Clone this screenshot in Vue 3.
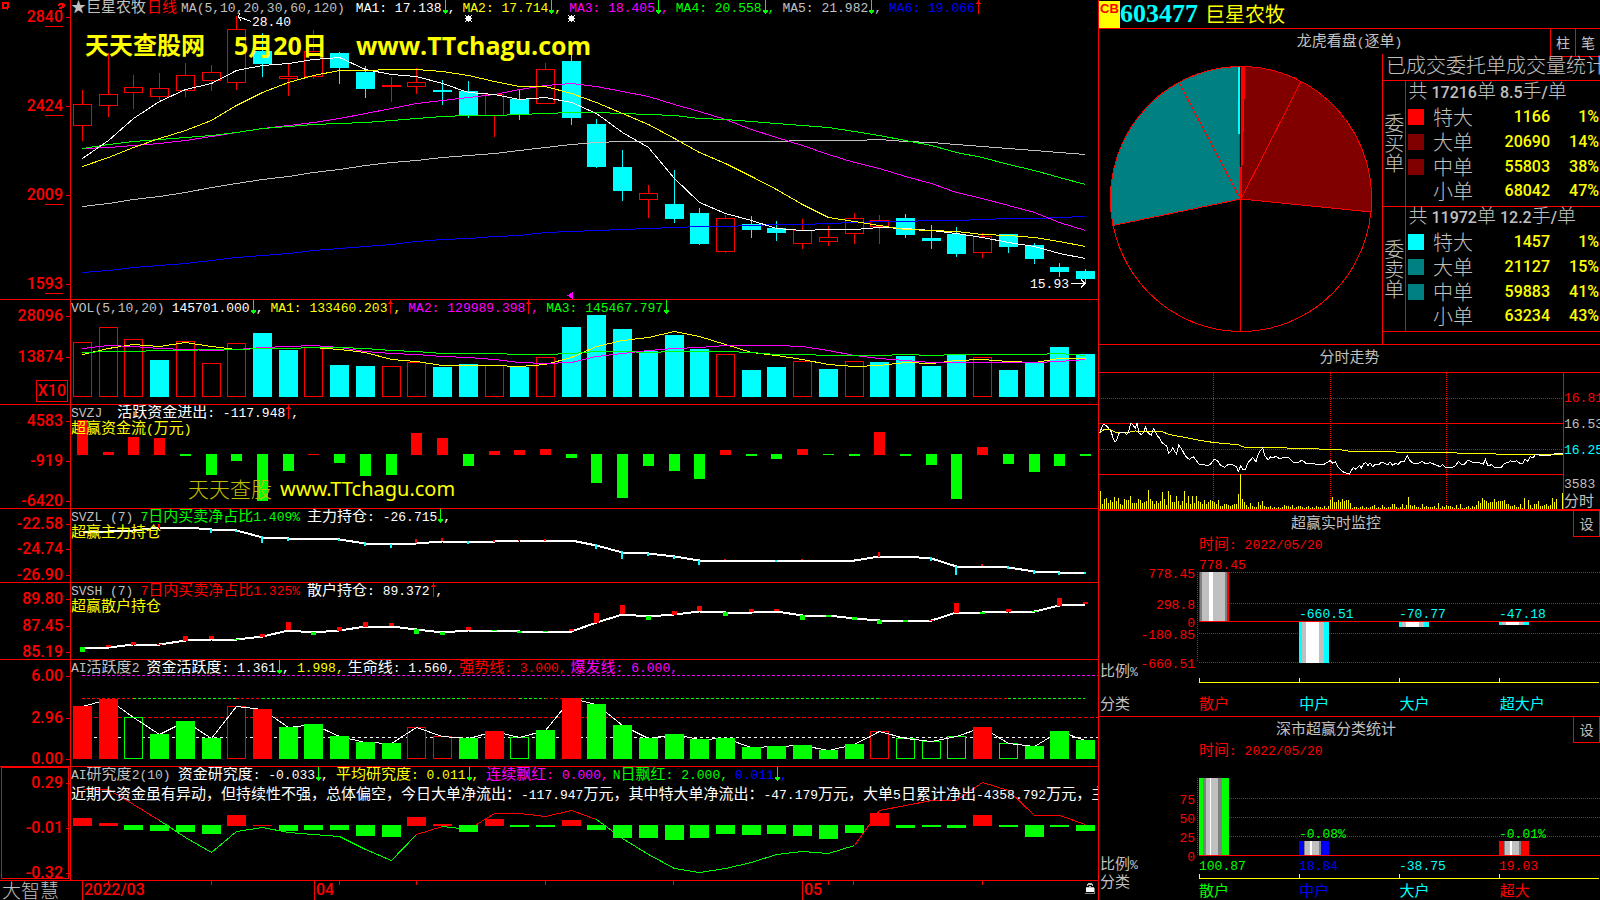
<script setup>
import { h } from 'vue'

// Text with Chinese runs set slightly larger than the monospaced Latin runs.
const Mix = (props) =>
  h('span', props.s.split(/([\u3000-\u9fff\uff00-\uffef★]+)/).filter(Boolean).map((run) =>
    /[\u3000-\u9fff\uff00-\uffef★]/.test(run) ? h('span', { class: 'zh' }, run) : run))
Mix.props = ['s']

const Arrow = (props) =>
  h('svg', { class: 'arrow', viewBox: '0 0 5 15', 'shape-rendering': 'crispEdges' }, [
    props.up
      ? h('path', { d: 'M2 0h1v14h-1zM1 2h3v1h-3zM0 3h5v1h-5z', fill: '#f00' })
      : h('path', { d: 'M2 0h1v14h-1zM1 12h3v1h-3zM0 10h1v2h-1zM4 10h1v2h-1zM1 10h3v2h-3z', fill: '#0f0' }),
  ])
Arrow.props = ['up']

const RED = '#f00', GREEN = '#0f0', CYAN = '#0ff', YELLOW = '#ff0', MAGENTA = '#f0f', SILVER = '#c0c0c0', BLUE = '#00f'
const X0 = 71, W = 1027
const X = (i) => Math.round(82 + i * 25.72)
const line = (ys) => ys.map((y, i) => `${X(i) + 0.5},${y + 0.5}`).join(' ')
const part = (ys, a, b) => ys.slice(a, b + 1).map((y, k) => `${X(a + k) + 0.5},${y + 0.5}`).join(' ')
const pts = (flat) => {
  const out = []
  for (let i = 0; i < flat.length; i += 2) out.push(`${flat[i]},${flat[i + 1]}`)
  return out.join(' ')
}
const at = (p, x, y) => ({ left: `${((x - X0) / W) * 100}%`, top: `${((y - p.y) / p.h) * 100}%` })
const atY = (p, y) => ({ top: `${((y + 0.5 - p.y) / p.h) * 100}%` })

const P = {
  main: { y: 0, h: 299, axis: [['2840', 16], ['2424', 105], ['2009', 194], ['1593', 283]] },
  vol: { y: 300, h: 104, axis: [['28096', 315], ['13874', 356]] },
  zj: { y: 405, h: 103, axis: [['4583', 420], ['-919', 460], ['-6420', 500]] },
  zl: { y: 509, h: 73, axis: [['-22.58', 524], ['-24.74', 549], ['-26.90', 574]] },
  sh: { y: 583, h: 76, axis: [['89.80', 598], ['87.45', 625], ['85.19', 651]] },
  act: { y: 660, h: 106, axis: [['6.00', 675], ['2.96', 717], ['0.00', 758]] },
  res: { y: 767, h: 113, axis: [['0.29', 782], ['-0.01', 827], ['-0.32', 872]] },
}
const box = (p) => `${X0} ${p.y} ${W} ${p.h}`

// up?, body top, body bottom, high, low
const candles = [
  [1, 104, 126, 90, 141], [1, 94, 106, 53, 117], [1, 87, 93, 75, 109], [1, 88, 97, 73, 100], [1, 75, 91, 63, 97],
  [1, 72, 81, 65, 91], [1, 29, 83, 16, 90], [0, 51, 64, 33, 77], [1, 76, 79, 64, 96], [1, 51, 77, 30, 79],
  [0, 53, 68, 52, 84], [0, 72, 89, 66, 98], [1, 85, 87, 77, 102], [1, 82, 87, 68, 94], [0, 90, 92, 80, 105],
  [0, 91, 116, 81, 118], [1, 94, 116, 94, 137], [0, 99, 115, 90, 120], [1, 69, 104, 63, 104], [0, 61, 118, 43, 125],
  [0, 124, 167, 119, 168], [0, 167, 191, 150, 201], [1, 193, 200, 185, 218], [0, 204, 219, 170, 223], [0, 213, 244, 208, 245],
  [1, 218, 252, 215, 253], [0, 224, 230, 216, 238], [0, 228, 233, 221, 241], [1, 230, 244, 219, 249], [1, 237, 242, 226, 246],
  [1, 218, 234, 213, 244], [1, 220, 227, 215, 244], [0, 218, 235, 214, 238], [0, 238, 241, 225, 249], [0, 234, 254, 227, 257],
  [1, 236, 253, 233, 258], [0, 234, 247, 234, 253], [0, 245, 259, 243, 264], [0, 267, 272, 263, 277], [0, 271, 279, 269, 283],
].map(([up, t, b, hi, lo], i) => ({ up, t, b, hi, lo, x: X(i) }))

const ma = [
  [SILVER, [206, 203, 199, 196, 192, 187, 183, 179, 176, 172, 169, 165, 162, 160, 157, 155, 153, 150, 147, 144, 142, 141, 141, 141, 141, 141, 141, 141, 140, 140, 140, 139, 141, 142, 144, 146, 148, 150, 152, 154]],
  [BLUE, [272, 270, 267, 265, 263, 260, 257, 255, 253, 250, 248, 246, 244, 241, 239, 238, 236, 235, 232, 231, 230, 229, 228, 227, 226, 226, 225, 224, 224, 223, 222, 221, 221, 220, 220, 219, 218, 218, 217, 216]],
  [MAGENTA, [148, 147, 145, 143, 140, 136, 132, 128, 125, 122, 118, 113, 108, 103, 100, 97, 94, 89, 85, 83, 86, 91, 96, 104, 111, 119, 129, 137, 145, 154, 162, 168, 176, 183, 192, 198, 205, 212, 222, 230]],
  [GREEN, [148, 144, 141, 139, 137, 135, 132, 128, 126, 124, 123, 122, 120, 118, 116, 115, 115, 114, 113, 112, 112, 113, 114, 115, 118, 119, 121, 123, 125, 127, 131, 135, 140, 145, 152, 157, 164, 170, 177, 184]],
  ['#fff', [158, 140, 118, 101, 89, 83, 70, 65, 63, 59, 57, 69, 74, 76, 83, 92, 94, 99, 97, 102, 113, 132, 147, 178, 202, 213, 220, 228, 230, 229, 229, 227, 228, 230, 233, 237, 242, 246, 253, 258]],
  [YELLOW, [166, 157, 147, 138, 130, 120, 105, 92, 82, 75, 70, 70, 69, 69, 71, 75, 81, 86, 86, 93, 102, 113, 124, 138, 152, 163, 176, 189, 204, 217, 221, 225, 229, 230, 231, 234, 235, 237, 241, 246]],
].map(([color, ys]) => ({ color, d: line(ys) }))

const volTops = [342, 327, 339, 360, 341, 363, 343, 333, 350, 347, 365, 366, 366, 362, 367, 364, 365, 367, 357, 327, 315, 329, 351, 335, 349, 354, 370, 367, 361, 369, 361, 362, 356, 366, 355, 357, 370, 362, 347, 354]
const volUp = [0, 1, 2, 4, 5, 6, 9, 12, 13, 16, 18, 25, 28, 30, 35]
const volMa = [
  [YELLOW, [354, 348, 344, 346, 342, 346, 349, 348, 348, 347, 349, 352, 359, 361, 365, 365, 365, 366, 364, 357, 346, 340, 337, 331, 336, 344, 352, 355, 359, 364, 366, 365, 362, 363, 360, 359, 361, 362, 358, 358]],
  [MAGENTA, [348, 345, 346, 348, 349, 350, 349, 347, 346, 345, 347, 351, 353, 354, 356, 357, 359, 362, 363, 362, 356, 353, 350, 348, 347, 345, 345, 345, 346, 350, 355, 358, 360, 362, 362, 362, 362, 362, 361, 359]],
  [GREEN, [352, 351, 351, 350, 350, 349, 349, 348, 348, 347, 347, 348, 350, 351, 353, 353, 353, 354, 354, 353, 351, 351, 352, 351, 351, 351, 352, 354, 354, 355, 355, 355, 354, 355, 354, 354, 354, 354, 353, 355]],
].map(([color, ys]) => ({ color, d: line(ys) }))

const flow = [35, 3, 18, 17, -2, -21, -7, -47, -17, 1, -9, -22, -21, 22, 17, -12, 4, 5, 6, -4, -29, -44, -12, -17, -25, 5, -2, -5, 6, -1, -2, 23, -2, -11, -45, 8, -10, -18, -12, -2]

const holdMain = [531, 531, 530, 527, 527, 529, 530, 537, 538, 538, 539, 543, 544, 543, 541, 541, 541, 540, 540, 540, 545, 552, 553, 556, 560, 560, 560, 560, 560, 560, 560, 556, 556, 558, 566, 566, 567, 571, 572, 572]
const holdTicks = [[3, 1, 524, 528], [5, 0, 529, 533], [6, 0, 530, 532], [7, 0, 536, 543], [8, 0, 538, 541], [10, 0, 539, 541], [11, 0, 542, 546], [12, 0, 544, 548], [13, 1, 539, 543], [14, 1, 538, 541], [15, 0, 541, 544], [16, 1, 540, 542], [17, 1, 540, 541], [18, 1, 539, 541], [20, 0, 544, 549], [21, 0, 551, 559], [22, 0, 553, 556], [23, 0, 556, 559], [24, 0, 560, 565], [25, 1, 559, 560], [27, 0, 560, 562], [28, 1, 559, 560], [31, 1, 552, 557], [33, 0, 557, 561], [34, 0, 566, 575], [35, 1, 564, 566], [36, 0, 566, 569], [37, 0, 570, 574], [38, 0, 572, 575], [39, 0, 572, 574]]

const holdRetail = [647, 647, 644, 644, 640, 639, 639, 636, 630, 632, 630, 626, 626, 629, 632, 630, 630, 631, 631, 631, 622, 614, 616, 614, 611, 612, 612, 611, 615, 615, 618, 620, 620, 620, 612, 612, 611, 611, 605, 604]
const retailTicks = [[0, 647, 652], [1, 645, 647], [1, 642, 645], [1, 644, 645], [1, 636, 641], [1, 636, 639], [0, 639, 640], [1, 634, 637], [1, 622, 630], [0, 632, 635], [1, 627, 631], [1, 622, 627], [1, 623, 626], [0, 629, 634], [0, 632, 635], [1, 627, 630], [0, 630, 631], [0, 631, 633], [0, 631, 632], [1, 629, 631], [1, 613, 623], [1, 605, 614], [0, 616, 620], [1, 611, 615], [1, 606, 611], [0, 612, 616], [1, 609, 612], [1, 609, 611], [0, 615, 620], [0, 615, 617], [0, 617, 620], [0, 620, 624], [0, 620, 622], [1, 620, 621], [1, 603, 613], [0, 612, 614], [1, 609, 612], [0, 611, 612], [1, 598, 606], [1, 602, 604]]

// R/G are filled bars, r/g outlined ones
const actTops = [706, 699, 717, 734, 721, 738, 706, 709, 727, 724, 736, 742, 743, 727, 736, 738, 731, 737, 730, 698, 704, 725, 738, 734, 739, 738, 747, 746, 745, 750, 744, 731, 738, 741, 736, 727, 743, 746, 731, 740]
const actKind = 'RRgGGGrRGGGGGrrGRgGRGGGGGGGGGGGrgggRgGGG'
const act = actTops.map((t, i) => ({ t, x: X(i), solid: 'RG'.includes(actKind[i]), c: 'Rr'.includes(actKind[i]) ? RED : GREEN }))
const actHollow = act.filter((b) => !b.solid)
const actSolid = act.filter((b) => b.solid)
const strongRuns = [[0, 2, RED], [2, 6, GREEN], [6, 7, RED], [7, 15, GREEN], [15, 17, RED], [17, 18, GREEN], [18, 19, RED], [19, 31, GREEN], [31, 36, RED], [36, 39, GREEN]]

const study = [8, 3, -5, -6, -7, -9, 11, 1, -6, -5, -5, -11, -12, 9, 2, -7, 7, -2, -2, 6, -5, -13, -13, -15, -13, -9, -10, -9, -11, -14, -8, 13, -3, -2, -3, 11, -2, -12, -2, -6]
const studyLine = [789, 789, 804, 820, 837, 852, 831, 827, 832, 834, 836, 849, 860, 834, 826, 829, 813, 813, 816, 810, 819, 838, 854, 868, 872, 868, 862, 854, 851, 853, 845, 810, 805, 800, 800, 782, 790, 815, 815, 824]
const studyRuns = [[0, 3, RED], [3, 13, GREEN], [13, 14, RED], [14, 15, GREEN], [15, 20, RED], [20, 30, GREEN], [30, 39, RED]]

const dateTicks = [108, 211, 339, 416, 545, 673, 828, 853, 982]

const maHead = [
  ['MA1: 17.138', 'white', 0], ['MA2: 17.714', 'yellow', 0], ['MA3: 18.405', 'magenta', 0],
  ['MA4: 20.558', 'green', 0], ['MA5: 21.982', 'silver', 0], ['MA6: 19.066', 'blue', 1],
]

const orders = [
  { side: '委买单', total: '共 17216单 8.5手/单', rows: [['特大', 1166, '1%', 'red'], ['大单', 20690, '14%', 'maroon'], ['中单', 55803, '38%', 'maroon'], ['小单', 68042, '47%', '']] },
  { side: '委卖单', total: '共 11972单 12.2手/单', rows: [['特大', 1457, '1%', 'cyan'], ['大单', 21127, '15%', 'teal'], ['中单', 59883, '41%', 'teal'], ['小单', 63234, '43%', '']] },
]

const price = pts([5, 70, 12, 50, 18, 42, 26, 48, 34, 58, 40, 66, 45, 84, 50, 94, 56, 92, 62, 70, 68, 68, 78, 66, 86, 74, 92, 64, 98, 40, 104, 44, 112, 54, 118, 38, 122, 68, 130, 74, 136, 68, 142, 50, 148, 66, 156, 74, 160, 76, 166, 56, 172, 64, 178, 78, 184, 84, 190, 96, 200, 104, 206, 108, 212, 130, 218, 124, 224, 114, 230, 124, 236, 132, 242, 104, 250, 116, 258, 130, 266, 142, 274, 148, 286, 140, 294, 150, 304, 164, 316, 162, 328, 168, 338, 162, 348, 148, 358, 152, 368, 166, 380, 172, 390, 164, 404, 164, 416, 170, 421, 184, 428, 168, 434, 178, 442, 178, 450, 158, 458, 150, 464, 142, 474, 156, 480, 134, 486, 124, 494, 114, 500, 136, 510, 150, 518, 140, 526, 144, 534, 138, 544, 146, 560, 142, 574, 144, 586, 158, 600, 158, 612, 150, 624, 160, 650, 162, 680, 162,
  696, 152, 704, 160, 712, 156, 720, 172, 736, 186, 754, 192, 766, 172, 774, 178, 784, 166, 790, 174, 796, 162, 804, 158, 810, 168, 816, 158, 824, 170, 832, 162, 842, 164, 850, 156, 870, 164, 876, 156, 884, 166, 892, 160, 900, 164, 910, 154, 918, 156, 928, 136, 936, 152, 948, 162, 962, 160, 972, 154, 984, 162, 996, 158, 1012, 164, 1026, 170, 1034, 164, 1042, 172, 1058, 174, 1072, 168, 1082, 154, 1090, 164, 1100, 162, 1110, 150, 1122, 156, 1142, 158, 1156, 162, 1162, 148, 1170, 168, 1180, 164, 1190, 172, 1210, 172, 1220, 160, 1230, 158, 1238, 152, 1246, 156, 1256, 152, 1266, 160, 1274, 160, 1280, 148, 1290, 154, 1296, 140, 1304, 144, 1314, 132, 1328, 136, 1356, 136, 1376, 130, 1398, 130])
const average = pts([5, 68, 20, 58, 36, 58, 52, 66, 86, 68, 110, 63, 190, 64, 215, 74, 250, 80, 300, 90, 350, 98, 420, 104, 440, 112, 550, 113, 600, 116, 724, 118, 734, 121, 759, 124, 890, 124, 896, 127, 1072, 127, 1078, 130, 1190, 130, 1196, 133, 1398, 133])
const minuteVol = [54, 15, 30, 33, 18, 27, 21, 36, 24, 33, 15, 12, 30, 27, 27, 39, 18, 18, 18, 30, 27, 18, 20, 24, 57, 30, 24, 15, 24, 18, 24, 50, 30, 12, 54, 42, 21, 21, 39, 24, 12, 24, 54, 18, 39, 15, 39, 18, 38, 24, 21, 15, 27, 15, 21, 27, 24, 22, 15, 27, 9, 9, 15, 14, 12, 9, 13, 15, 15, 45, 105, 30, 20, 12, 6, 18, 9, 6, 6, 21, 12, 24, 9, 6, 6, 9, 3, 6, 3, 6, 3, 6, 12, 9, 9, 6, 12, 3, 6, 10, 9, 6, 3, 6, 8, 4, 6, 3, 9, 6, 6, 3, 8, 4, 9,
  27, 36, 21, 21, 27, 21, 30, 24, 27, 27, 18, 4, 6, 6, 3, 6, 8, 4, 6, 3, 7, 10, 12, 4, 6, 3, 12, 6, 4, 6, 6, 15, 15, 6, 4, 6, 15, 4, 12, 36, 12, 9, 11, 6, 6, 3, 15, 6, 8, 5, 6, 6, 8, 4, 18, 3, 9, 6, 12, 9, 9, 6, 3, 12, 4, 15, 3, 4, 6, 8, 4, 9, 6, 12, 24, 18, 33, 27, 24, 18, 21, 21, 30, 21, 24, 24, 24, 27, 15, 15, 9, 9, 12, 6, 6, 15, 3, 33, 0, 27, 12, 4, 15, 15, 24, 9, 9, 12, 15, 8, 12, 33, 21, 30, 0, 0, 48]
const intraday = { y: 373, h: 137 }

// Bars with a metallic sheen: each stripe is [width, colour]
const G = '#808080'
const stripes = (list) => {
  let x = 0
  return list.map(([w, c]) => { const s = { x, w, c }; x += w; return s })
}
const cyanBar = stripes([[3, CYAN], [4, SILVER], [13, '#fff'], [5, SILVER], [5, CYAN]])
const smallBar = (c) => stripes([[5, c], [1, G], [5, SILVER], [2, '#fff'], [7, SILVER], [2, G], [8, c]])
const live = {
  y: 553, h: 137,
  title: '超赢实时监控',
  zero: 621, base: 682, rule: [572, 662],
  dotted: [572, 603, 633, 662],
  scale: [['778.45', 573], ['298.8', 604], ['0', 622], ['-180.85', 634], ['-660.51', 663]],
  notes: [['比例%', 671]],
  bars: [
    { x: 0, y: 572, h: 49, s: stripes([[1, RED], [2, G], [7, SILVER], [4, '#fff'], [12, SILVER], [2, G], [2, RED]]) },
    { x: 100, y: 622, h: 41, s: cyanBar }, { x: 200, y: 622, h: 5, s: cyanBar }, { x: 300, y: 622, h: 3, s: cyanBar },
  ],
  values: [['778.45', 0, 564, 'red'], ['-660.51', 100, 613, 'cyan'], ['-70.77', 200, 613, 'cyan'], ['-47.18', 300, 613, 'cyan']],
  cats: [['散户', 'red'], ['中户', 'cyan'], ['大户', 'cyan'], ['超大户', 'cyan']],
  catNote: '分类',
}
const stat = {
  y: 759, h: 123,
  title: '深市超赢分类统计',
  zero: 855, base: 878, rule: [778, 855],
  dotted: [798, 817, 836],
  scale: [['75', 799], ['50', 818], ['25', 837], ['0', 856]],
  notes: [['比例%', 864], ['分类', 882]],
  bars: [
    { x: 0, y: 778, h: 77, s: stripes([[4, GREEN], [3, G], [4, SILVER], [1, '#fff'], [7, SILVER], [4, G], [7, GREEN]]) },
    { x: 100, y: 841, h: 14, s: smallBar(BLUE) }, { x: 300, y: 841, h: 14, s: smallBar(RED) },
  ],
  values: [['-0.08%', 100, 833, 'green'], ['-0.01%', 300, 833, 'green'], ['100.87', 0, 865, 'green'], ['18.84', 100, 865, 'blue'], ['-38.75', 200, 865, 'cyan'], ['19.03', 300, 865, 'red']],
  cats: [['散户', 'green'], ['中户', 'blue'], ['大户', 'cyan'], ['超大', 'red']],
  catNote: '',
}
</script>

<template>
  <div class="terminal">
    <main class="charts">
      <section class="panel">
        <div class="axis marked">
          <svg class="corner" viewBox="0 0 70 16" shape-rendering="crispEdges">
            <path d="M2 2h7v6h-1v2h-1v-1h-5zM4 4v3h3v-3z" fill="#f00" fill-rule="evenodd" />
            <path d="M58 4h1v-1h5v1h1v3h-1v1h-2v1h-3v-2h2v-1h1v-1h-2v1h-2zM59 10h3v2h-3z" fill="#f00" />
          </svg>
          <span v-for="a in P.main.axis" :key="a[0]" class="mark" :style="atY(P.main, a[1])">{{ a[0] }}</span>
        </div>
        <div class="plot">
          <svg class="canvas" :viewBox="box(P.main)" preserveAspectRatio="none">
            <g v-for="c in candles" :key="c.x" :stroke="c.up ? '#f00' : '#0ff'">
              <template v-if="c.up">
                <line :x1="c.x + 0.5" :x2="c.x + 0.5" :y1="c.hi" :y2="c.t" />
                <line :x1="c.x + 0.5" :x2="c.x + 0.5" :y1="c.b" :y2="c.lo" />
                <rect :x="c.x - 8.5" :y="c.t + 0.5" width="18" :height="c.b - c.t - 1" fill="none" />
              </template>
              <template v-else>
                <line :x1="c.x + 0.5" :x2="c.x + 0.5" :y1="c.hi" :y2="c.lo" />
                <rect :x="c.x - 9" :y="c.t" width="19" :height="c.b - c.t" fill="#0ff" stroke="none" />
              </template>
            </g>
            <polyline v-for="m in ma" :key="m.color" :points="m.d" fill="none" :stroke="m.color" />
            <path d="M238 16.5L251 21.5M238 16.5l2-3M238 16.5l3 4" stroke="#fff" fill="none" />
            <path d="M1071 283.5h14M1081 279.5l4 4l-4 4" stroke="#fff" fill="none" />
            <path v-for="x in [465, 568]" :key="x" :d="`M${x + 1} 16h5v5h-5zM${x} 15h1v1h-1zM${x + 6} 15h1v1h-1zM${x} 21h1v1h-1zM${x + 6} 21h1v1h-1zM${x + 3} 15h1v1h-1zM${x + 3} 21h1v1h-1zM${x} 18h1v1h-1zM${x + 6} 18h1v1h-1z`" fill="#fff" />
            <path d="M567 295.5L573 291.5V299.5z" fill="#f0f" />
          </svg>
          <header class="head">
            <Mix class="silver" s="★巨星农牧" /><Mix class="red period" s="日线" />
            <span class="silver params">MA(5,10,20,30,60,120)</span>
            <span v-for="m in maHead" :key="m[0]" :class="['field', m[1]]">{{ m[0] }}<Arrow :up="m[2]" /><template v-if="!m[2]">,</template></span>
          </header>
          <div class="watermark bold" :style="at(P.main, 85, 45)"><span>天天查股网</span><span class="latin">5月20日</span><span class="latin">www.TTchagu.com</span></div>
          <span class="tag" :style="at(P.main, 252, 22)">28.40</span>
          <span class="tag" :style="at(P.main, 1030, 284)">15.93</span>
        </div>
      </section>

      <section class="panel">
        <div class="axis">
          <span v-for="a in P.vol.axis" :key="a[0]" class="mark" :style="atY(P.vol, a[1])">{{ a[0] }}</span>
          <span class="unit">X10</span>
        </div>
        <div class="plot">
          <svg class="canvas" :viewBox="box(P.vol)" preserveAspectRatio="none">
            <template v-for="(t, i) in volTops" :key="i">
              <rect v-if="volUp.includes(i)" :x="X(i) - 8.5" :y="t + 0.5" width="18" :height="396 - t" fill="none" stroke="#f00" />
              <rect v-else :x="X(i) - 9" :y="t" width="19" :height="397 - t" fill="#0ff" />
            </template>
            <polyline v-for="m in volMa" :key="m.color" :points="m.d" fill="none" :stroke="m.color" />
          </svg>
          <header class="head">
            <span class="silver">VOL(5,10,20)</span>
            <span class="field white">145701.000<Arrow />,</span>
            <span class="field yellow">MA1: 133460.203<Arrow :up="1" />,</span>
            <span class="field magenta">MA2: 129989.398<Arrow :up="1" />,</span>
            <span class="field green">MA3: 145467.797<Arrow /></span>
          </header>
        </div>
      </section>

      <section class="panel">
        <div class="axis">
          <span v-for="a in P.zj.axis" :key="a[0]" class="mark" :style="atY(P.zj, a[1])">{{ a[0] }}</span>
        </div>
        <div class="plot">
          <svg class="canvas" :viewBox="box(P.zj)" preserveAspectRatio="none">
            <rect v-for="(v, i) in flow" :key="i" :x="X(i) - 5" width="11" :y="v > 0 ? 455 - v : 454" :height="Math.abs(v)" :fill="v > 0 ? '#f00' : '#0f0'" />
          </svg>
          <header class="head">
            <span class="silver wide">SVZJ</span>
            <span class="field white"><Mix s="活跃资金进出: -117.948" /><Arrow :up="1" />,</span>
          </header>
          <p class="sub"><Mix s="超赢资金流(万元)" /></p>
          <div class="watermark thin" :style="at(P.zj, 188, 489)"><span>天天查股</span><span class="latin">www.TTchagu.com</span></div>
        </div>
      </section>

      <section class="panel">
        <div class="axis">
          <span v-for="a in P.zl.axis" :key="a[0]" class="mark" :style="atY(P.zl, a[1])">{{ a[0] }}</span>
        </div>
        <div class="plot">
          <svg class="canvas" :viewBox="box(P.zl)" preserveAspectRatio="none">
            <polyline :points="line(holdMain)" fill="none" stroke="#fff" stroke-width="2" />
            <rect v-for="t in holdTicks" :key="t[0]" :x="X(t[0]) - 1" width="2" :y="t[2]" :height="t[3] - t[2]" :fill="t[1] ? '#f00' : '#0ff'" />
          </svg>
          <header class="head">
            <span class="silver">SVZL (7)</span>
            <Mix class="green" s="7日内买卖净占比1.409%" />
            <span class="field white"><Mix s="主力持仓: -26.715" /><Arrow />,</span>
          </header>
          <p class="sub"><Mix s="超赢主力持仓" /></p>
        </div>
      </section>

      <section class="panel">
        <div class="axis">
          <span v-for="a in P.sh.axis" :key="a[0]" class="mark" :style="atY(P.sh, a[1])">{{ a[0] }}</span>
        </div>
        <div class="plot">
          <svg class="canvas" :viewBox="box(P.sh)" preserveAspectRatio="none">
            <polyline :points="line(holdRetail)" fill="none" stroke="#fff" stroke-width="2" />
            <rect v-for="(t, i) in retailTicks" :key="i" :x="X(i) - 2" width="5" :y="t[1]" :height="t[2] - t[1]" :fill="t[0] ? '#f00' : '#0f0'" />
          </svg>
          <header class="head">
            <span class="silver">SVSH (7)</span>
            <Mix class="red" s="7日内买卖净占比1.325%" />
            <span class="field white"><Mix s="散户持仓: 89.372" /><Arrow :up="1" />,</span>
          </header>
          <p class="sub"><Mix s="超赢散户持仓" /></p>
        </div>
      </section>

      <section class="panel">
        <div class="axis">
          <span v-for="a in P.act.axis" :key="a[0]" class="mark" :style="atY(P.act, a[1])">{{ a[0] }}</span>
        </div>
        <div class="plot">
          <svg class="canvas" :viewBox="box(P.act)" preserveAspectRatio="none">
            <path d="M82 675.5H1098" stroke="#f0f" stroke-dasharray="3 2" />
            <path d="M82 717.5H1098" stroke="#f00" stroke-dasharray="4 2" />
            <path d="M82 737.5H1098" stroke="#fff" stroke-dasharray="3 3" />
            <path v-for="r in strongRuns" :key="r[0]" :d="`M${X(r[0])} 698.5H${X(r[1])}`" :stroke="r[2]" stroke-dasharray="3 2" />
            <rect v-for="b in actHollow" :key="b.x" :x="b.x - 8.5" :y="b.t + 0.5" width="18" :height="758 - b.t" fill="#000" :stroke="b.c" />
            <polyline :points="line(actTops)" fill="none" stroke="#fff" />
            <rect v-for="b in actSolid" :key="b.x" :x="b.x - 9" :y="b.t" width="19" :height="759 - b.t" :fill="b.c" />
          </svg>
          <header class="head">
            <Mix class="silver" s="AI活跃度2" />
            <span class="field white"><Mix s="资金活跃度: 1.361" /><Arrow />,</span>
            <span class="yellow">1.998,</span>
            <Mix class="white tight" s="生命线: 1.560," />
            <Mix class="red tight" s="强势线: 3.000," />
            <Mix class="magenta tight" s="爆发线: 6.000," />
          </header>
        </div>
      </section>

      <section class="panel">
        <div class="axis framed">
          <span v-for="a in P.res.axis" :key="a[0]" class="mark" :style="atY(P.res, a[1])">{{ a[0] }}</span>
        </div>
        <div class="plot">
          <svg class="canvas" :viewBox="box(P.res)" preserveAspectRatio="none">
            <polyline v-for="r in studyRuns" :key="r[0]" :points="part(studyLine, r[0], r[1])" fill="none" :stroke="r[2]" />
            <rect v-for="(v, i) in study" :key="i" :x="X(i) - 9" width="19" :y="v > 0 ? 826 - v : 825" :height="Math.abs(v)" :fill="v > 0 ? '#f00' : '#0f0'" />
          </svg>
          <header class="head">
            <Mix class="silver" s="AI研究度2(10)" />
            <span class="field white"><Mix s="资金研究度: -0.033" /><Arrow />,</span>
            <span class="field yellow"><Mix s="平均研究度: 0.011" /><Arrow />,</span>
            <Mix class="magenta" s="连续飘红: 0.000," />
            <Mix class="green tight" s="N日飘红: 2.000," />
            <span class="field blue">0.011<Arrow />,</span>
          </header>
          <p class="comment"><Mix s="近期大资金虽有异动，但持续性不强，总体偏空，今日大单净流出：-117.947万元，其中特大单净流出：-47.179万元，大单5日累计净出-4358.792万元，主" /></p>
        </div>
      </section>

      <footer class="timeline">
        <span class="brand">大智慧</span>
        <div class="dates">
          <svg class="canvas" viewBox="71 881 1027 19" preserveAspectRatio="none">
            <path v-for="x in dateTicks" :key="x" :d="`M${x + 0.5} 881v4`" stroke="#f00" />
          </svg>
          <span class="month">2022/03</span>
          <span class="month">04</span>
          <span class="month">05</span>
          <svg class="lock" viewBox="0 0 11 12" shape-rendering="crispEdges">
            <path d="M3 0h4v1h1v2h-1v-1h-4v1h-1v-2h1z" fill="#c0c0c0" />
            <path d="M1 4h8v1h-8zM4 3h2v1h-2z" fill="#c0c0c0" />
            <path d="M1 5h8v4h-8z" fill="#fff" />
            <path d="M0 10h9v-5h1v6h-10z" fill="#808080" />
          </svg>
        </div>
      </footer>
    </main>

    <aside class="side">
      <header class="stock"><span class="cb">CB</span><b class="code">603477</b><h1>巨星农牧</h1></header>

      <section class="depth">
        <div class="bar split">
          <h2><Mix s="龙虎看盘(逐单)" /></h2>
          <div class="tools"><button type="button">柱</button><button type="button">笔</button></div>
        </div>
        <div class="depth-body">
          <svg class="pie" viewBox="1099 54 283 290" preserveAspectRatio="none" stroke="#f00" shape-rendering="crispEdges">
            <ellipse cx="1241" cy="199" rx="130.5" ry="132.5" fill="#000" />
            <path d="M1241 199L1245 66.5A130.5 132.5 0 0 1 1371 212z" fill="maroon" />
            <path d="M1241 199L1113 225.5A130.5 132.5 0 0 1 1237 66.5z" fill="teal" />
            <path d="M1241 199L1241 66.5L1245 66.5z" fill="#f00" />
            <path d="M1240.500 199V332M1241 199L1301 81.500M1240.500 199L1179 82.500" />
            <path d="M1238.500 67V102L1239.500 134" stroke="#0ff" stroke-width="2" fill="none" />
          </svg>
          <div class="orders">
            <h3>已成交委托单成交量统计</h3>
            <table>
              <colgroup><col class="c-side"><col class="c-sw"><col><col class="c-num"><col class="c-pct"></colgroup>
              <tbody v-for="o in orders" :key="o.side">
                <tr><th class="vert" rowspan="5" scope="rowgroup">{{ o.side }}</th><td class="total" colspan="4"><Mix :s="o.total" /></td></tr>
                <tr v-for="r in o.rows" :key="r[0]">
                  <td class="sw"><i :class="r[3]"></i></td><th scope="row">{{ r[0] }}</th><td class="num">{{ r[1] }}</td><td class="num pct">{{ r[2] }}</td>
                </tr>
              </tbody>
            </table>
          </div>
        </div>
      </section>

      <section class="minute">
        <div class="bar"><h2><Mix s="分时走势" /></h2></div>
        <div class="minute-body">
          <svg class="minute-chart" viewBox="3 -111 1392 408" preserveAspectRatio="none" shape-rendering="crispEdges">
            <g stroke="#f00" stroke-width="3" fill="none">
              <path d="M3 -33.500H1397M3 118.500H1397M346.500 -111V297M697.500 -111V297M1045.500 -111V297" stroke-dasharray="3 3" />
              <path d="M3 40.500H1397M3 193.500H1397" />
            </g>
            <path v-for="(v, i) in minuteVol" :key="i" :d="`M${7.5 + i * 6} 297v${-v}`" stroke="#ff0" stroke-width="3" />
            <polyline :points="average" fill="none" stroke="#ff0" stroke-width="3" />
            <polyline :points="price" fill="none" stroke="#fff" stroke-width="3" />
          </svg>
          <div class="levels">
            <span class="red" :style="atY(intraday, 398)">16.81</span>
            <span class="silver" :style="atY(intraday, 424)">16.53</span>
            <span class="cyan" :style="atY(intraday, 450)">16.25</span>
            <span class="silver" :style="atY(intraday, 484)">3583</span>
            <span class="silver" :style="atY(intraday, 502)"><Mix s="分时" /></span>
          </div>
        </div>
      </section>

      <section v-for="p in [live, stat]" :key="p.title" class="monitor">
        <div class="bar">
          <h2><Mix :s="p.title" /></h2>
          <div class="tools"><button type="button">设</button></div>
        </div>
        <p class="when red"><Mix s="时间: 2022/05/20" /></p>
        <div class="monitor-body">
          <div class="scale">
            <svg class="canvas" :viewBox="`0 ${p.y} 100 ${p.h}`" preserveAspectRatio="none">
              <path :d="`M98.500 ${p.rule[0]}V${p.rule[1]}`" stroke="#f00" stroke-dasharray="1 1" />
            </svg>
            <span v-for="s in p.scale" :key="s[0]" class="red val" :style="atY(p, s[1])">{{ s[0] }}</span>
            <span v-for="s in p.notes" :key="s[0]" class="silver note" :style="atY(p, s[1])"><Mix :s="s[0]" /></span>
          </div>
          <div class="plot">
            <svg class="canvas" :viewBox="`0 ${p.y} 401 ${p.h}`" preserveAspectRatio="none">
              <g stroke="#f00" stroke-dasharray="1 1">
                <path v-for="y in p.dotted" :key="y" :d="`M0 ${y + 0.5}H401`" />
              </g>
              <path :d="`M0 ${p.zero + 0.5}H401`" stroke="#f00" />
              <template v-for="b in p.bars" :key="b.x">
                <rect v-for="s in b.s" :key="s.x" :x="b.x + s.x" :y="b.y" :width="s.w" :height="b.h" :fill="s.c" />
              </template>
              <path :d="`M0.500 ${p.base - 4}v4.500H400M100.500 ${p.base - 4}v4M200.500 ${p.base - 4}v4M300.500 ${p.base - 4}v4`" stroke="#ff0" fill="none" />
            </svg>
            <span v-for="v in p.values" :key="v[0]" :class="['value', v[3]]" :style="{ left: `${v[1] / 4.01}%`, ...atY(p, v[2]) }">{{ v[0] }}</span>
          </div>
        </div>
        <div class="cats">
          <span class="silver lead"><Mix :s="p.catNote" /></span>
          <span v-for="c in p.cats" :key="c[0]" :class="c[1]"><Mix :s="c[0]" /></span>
        </div>
      </section>
    </aside>
  </div>
</template>

<style>
html, body { background: #000; }
</style>

<style scoped>
.terminal {
  display: grid;
  grid-template-columns: minmax(0, 1fr) 502px;
  height: 100vh;
  min-height: 760px;
  overflow: hidden;
  background: #000;
  color: #c0c0c0;
  font: 13px/17px "Liberation Mono", "Noto Sans CJK SC", monospace;
}
.terminal :deep(.zh) { font-family: "Noto Sans CJK SC", sans-serif; font-size: 15px; line-height: 0; font-weight: 400; }
h1, h2, h3, p { margin: 0; font-weight: 400; }
.white { color: #fff; }
.yellow { color: #ff0; }
.magenta { color: #f0f; }
.green { color: #0f0; }
.silver { color: #c0c0c0; }
.blue { color: #00f; }
.red { color: #f00; }
.cyan { color: #0ff; }

.charts {
  display: grid;
  grid-template-rows: minmax(0, 300fr) minmax(0, 105fr) minmax(0, 104fr) minmax(0, 74fr) minmax(0, 77fr) minmax(0, 107fr) minmax(0, 114fr) minmax(0, 19fr);
}
.panel { display: grid; grid-template-columns: 71px minmax(0, 1fr); border-bottom: 1px solid #f00; }
.axis { position: relative; border-right: 1px solid #f00; color: #f00; font: 500 16px/16px Roboto, "Liberation Sans", sans-serif; }
.mark { position: absolute; right: 7px; transform: translateY(-50%); }
.mark::before { content: ""; position: absolute; right: -7px; top: 8px; width: 4px; height: 1px; background: #f00; }
.marked .mark::after { content: ""; position: absolute; right: 0; bottom: -2px; width: 18px; height: 1px; background: #f00; }
.corner { position: absolute; left: 0; top: 0; width: 70px; height: 16px; }
.unit { position: absolute; right: 2px; bottom: 2px; padding: 2px 1px; border: 1px solid #f00; }
.framed::before { content: ""; position: absolute; inset: 0 1px 1px 1px; border: 1px solid #f00; }
.plot { position: relative; min-width: 0; overflow: hidden; }
.canvas { position: absolute; inset: 0; width: 100%; height: 100%; shape-rendering: crispEdges; }
.head { position: relative; display: flex; gap: 7px; white-space: pre; }
.period { margin-left: -6px; }
.params { margin: 0 4px 0 -3px; }
.wide { margin-right: 8px; }
.tight { margin-left: -3px; }
.field { display: flex; }
.terminal :deep(.arrow) { width: 5px; height: 15px; margin-left: 1px; }
.sub { position: relative; color: #ff0; line-height: 15px; }
.comment { position: relative; margin-top: 3px; color: #fff; white-space: nowrap; }
.watermark { position: absolute; display: flex; transform: translateY(-50%); color: #ff0; white-space: nowrap; }
.bold { gap: 29px; font: 700 24px/32px "Open Sans", "Noto Sans CJK SC", sans-serif; }
.bold .latin { font-size: 25px; }
.thin { gap: 8px; font: 21px/28px "Noto Sans", "Noto Sans CJK SC", sans-serif; }
.thin span:first-child { color: #c0c000; font-weight: 300; }
.thin .latin { font-size: 20px; }
.tag { position: absolute; transform: translateY(-50%); color: #fff; }
.timeline { display: grid; grid-template-columns: 71px minmax(0, 1fr); }
.brand { padding-left: 2px; font: 300 19px/18px "Noto Sans CJK SC", sans-serif; }
.dates { position: relative; display: grid; grid-template-columns: 232fr 488fr 296fr; padding-left: 11px; color: #f00; font: 500 16px/18px Roboto, "Liberation Sans", sans-serif; }
.month { padding-left: 1px; border-left: 1px solid #f00; }
.lock { position: absolute; right: 2px; top: 2px; width: 11px; height: 12px; }

.side {
  display: grid;
  grid-template-rows: minmax(0, 29fr) minmax(0, 316fr) minmax(0, 166fr) minmax(0, 206fr) minmax(0, 183fr);
  min-width: 0;
  border-left: 1px solid #f00;
}
.stock { display: flex; align-items: center; border-bottom: 1px solid #f00; }
.cb { align-self: stretch; width: 21px; margin-top: 1px; background: #ff0; color: #f00; font: 700 13px/16px "Liberation Sans", sans-serif; text-align: center; }
.code { color: #0ff; font: 700 26px/28px "Liberation Serif", serif; }
.stock h1 { margin-left: 7px; color: #ff0; font: 400 20px/26px "Noto Sans CJK SC", sans-serif; }
.depth { display: flex; flex-direction: column; border-bottom: 1px solid #f00; }
.bar { display: flex; height: 26px; }
.bar h2 { flex: 1; font-size: 13px; line-height: 28px; text-align: center; }
.split { display: grid; grid-template-columns: minmax(0, 1fr) auto minmax(0, 1fr); height: 25px; }
.split h2 { grid-column: 2; }
.tools { display: flex; justify-content: flex-end; }
.tools button { width: 25px; padding: 0 0 2px; border: 1px solid #f00; border-width: 0 0 1px 1px; background: #000; color: #c0c0c0; font: 400 14px/20px "Noto Sans CJK SC", sans-serif; }
.monitor .tools button { width: 27px; border-right-width: 1px; }
.depth-body { flex: 1; display: grid; grid-template-columns: 283px minmax(0, 1fr); min-height: 0; }
.pie { width: 100%; height: 100%; }
.orders { overflow: hidden; border-left: 1px solid #f00; }
.orders h3 { height: 26px; padding-left: 3px; border-bottom: 1px solid #f00; font: 300 20px/22px "Noto Sans CJK SC", sans-serif; white-space: nowrap; }
table { width: 100%; border-collapse: collapse; table-layout: fixed; font: 500 16px/20px Roboto, "Liberation Sans", "Noto Sans CJK SC", sans-serif; }
.c-side { width: 22px; }
.c-sw { width: 28px; }
.c-num { width: 71px; }
.c-pct { width: 50px; }
td, th { box-sizing: border-box; height: 25px; padding: 0 0 4px; line-height: 20px; text-align: left; }
th { font-family: "Noto Sans CJK SC", sans-serif; font-size: 20px; font-weight: 300; white-space: nowrap; }
tbody { border-bottom: 1px solid #f00; }
.vert { padding: 0; border-right: 1px solid #f00; writing-mode: vertical-rl; text-align: center; }
.total { padding: 0 0 2px 3px; white-space: nowrap; }
.terminal .total :deep(.zh) { font-size: 19px; font-weight: 300; }
.sw { padding-left: 2px; }
.sw i { display: block; width: 16px; height: 16px; }
i.red { background: #f00; }
i.maroon { background: maroon; }
i.cyan { background: #0ff; }
i.teal { background: teal; }
.num { color: #ff0; text-align: right; }
.pct { padding-right: 1px; }

.minute { display: flex; flex-direction: column; border-bottom: 2px solid #f00; }
.minute .bar { height: 27px; border-bottom: 1px solid #f00; }
.minute-body { flex: 1; display: grid; grid-template-columns: minmax(0, 1fr) 37px; min-height: 0; }
.minute-chart { width: 100%; height: 100%; }
.levels { position: relative; overflow: hidden; border-left: 1px solid #f00; }
.levels > span { position: absolute; left: 0; transform: translateY(-50%); white-space: nowrap; }

.monitor { display: flex; flex-direction: column; }
.monitor .bar { flex: none; }
.monitor .when { height: 16px; padding-left: 100px; line-height: 18px; white-space: pre; }
.monitor-body { flex: 1; display: grid; grid-template-columns: 100px minmax(0, 1fr); }
.scale { position: relative; }
.val { position: absolute; right: 4px; transform: translateY(-50%); }
.note { position: absolute; left: 1px; transform: translateY(-50%); }
.value { position: absolute; transform: translateY(-50%); }
.cats { display: grid; grid-template-columns: 100px repeat(4, minmax(0, 1fr)); height: 18px; line-height: 22px; }
.lead { padding-left: 1px; }
.monitor:nth-last-child(2) { border-bottom: 1px solid #f00; }
.monitor:nth-last-child(2) .cats { height: 26px; line-height: 32px; }
</style>
